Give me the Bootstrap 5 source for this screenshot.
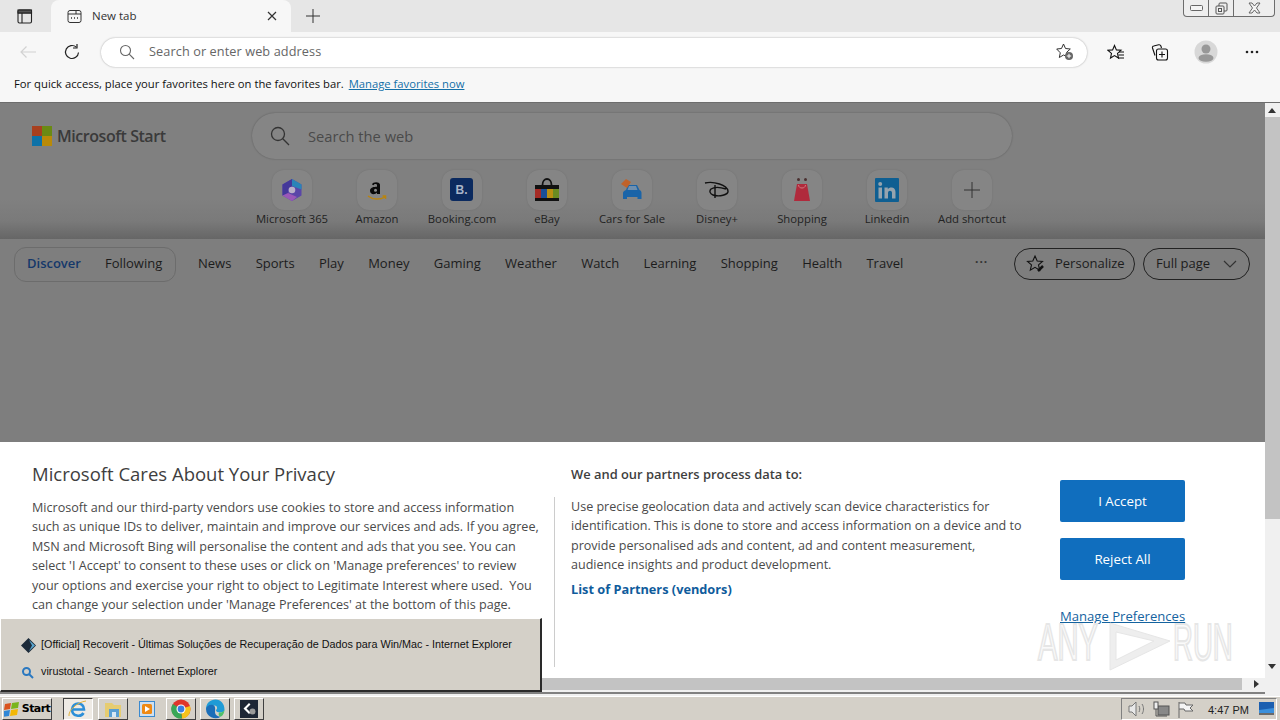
<!DOCTYPE html>
<html lang="en">
<head>
<meta charset="utf-8">
<title>New tab</title>
<link href="https://cdn.jsdelivr.net/npm/bootstrap@5.3.0/dist/css/bootstrap.min.css" rel="stylesheet">
<style>
html,body{height:720px;overflow:hidden}
body{width:1280px;font-family:"Open Sans","Noto Sans",sans-serif;color:#1a1a1a;background:#fff;position:relative}
a{text-decoration:none}
.tabstrip{height:32px;background:#e6e6e6}
.winbox{width:42px;height:32px}
.tabshape{width:240px;height:32px;margin-left:5px;padding:0 14px 0 16px;background:#f7f7f7;border-radius:8px 8px 0 0;font-size:12px;color:#333}
.tab-title{margin-left:10px;font-size:11.5px}
.newtab{margin-left:12px;width:20px}
.capbtns{position:absolute;right:5px;top:0;width:92px;height:17px;border:1px solid #6c6c6c;border-top:0;border-radius:0 0 4px 4px;background:#eee}
.capbtns>div{border-right:1px solid #6c6c6c;height:100%}
.capbtns>div:last-child{border-right:0}
.capslot{width:25px}
.toolbar{height:38px;background:#f7f7f7;padding-top:2px}
.backslot{width:26px;margin-left:15px}
.reloadslot{width:26px;margin-left:18px}
.omni{width:986px;height:29px;margin-left:16px;background:#fff;border-radius:15px;box-shadow:0 0 2px rgba(0,0,0,.35);padding:0 13px 0 18px;font-size:12.7px;color:#666}
.omni-text{margin-left:14px;letter-spacing:.1px}
.tooliconslot{width:24px}
.slot-a{margin-left:17px}
.slot-b{margin-left:20px}
.slot-c{margin-left:22px}
.favbar{background:#f7f7f7;border-bottom:1px solid #6d6d6d;padding:0 0 3px 14px;font-size:11.25px;color:#111;height:33px}
.favbar a{margin-left:5px;color:#1470a8;text-decoration:underline}
.stage{height:591px}
.viewport{width:1265px;position:relative;background:#808080}
.topdim{height:136px;background:linear-gradient(#808080 0,#808080 96px,#7a7a7a 118px,#666 136px);position:relative}
.brandrow{padding:10px 0 0 32px;height:67px}
.msbrand{width:220px;height:46px;font-size:16px;font-weight:600;color:#3a3a3a;letter-spacing:-.45px}
.winlogo{display:grid;grid-template-columns:10px 10px;gap:0;margin-right:5px}
.winlogo i{display:block;width:10px;height:10px}
.websearch{width:760px;height:46px;border-radius:23px;background:#858585;box-shadow:0 0 2px rgba(0,0,0,.3);padding-left:18px;font-size:14.7px;color:#4a4a4a}
.websearch span{margin-left:18px;padding-top:1px}
.shortcuts{padding-left:249.5px;height:69px}
.sc-item{width:85px;font-size:11.3px;color:#222;text-align:center}
.sc-tile{width:40px;height:40px;border-radius:12px;background:#858585;box-shadow:0 0 2px rgba(0,0,0,.12);margin-bottom:1px}
.sc-label{white-space:nowrap;line-height:15px}
.navzone{height:203px;background:#7e7e7e;padding:8px 15px 0 14px;font-size:13px;color:#1c1c1c}
.feedtoggle{width:162px;height:35px;border:1px solid #6c6c6c;border-radius:12px;padding:0 0 2px 12px;gap:24px}
.feedtoggle b{color:#15386a;font-weight:600}
.navlinks{margin-left:22px;gap:24.3px;height:35px;padding-bottom:2px}
.moredots{position:absolute;left:961px;top:0;height:35px;font-size:12px;font-weight:700;line-height:30px;color:#333;letter-spacing:1px}
.navright{position:absolute;right:0;top:0;gap:8px}
.pillbtn{height:32px;border:1px solid #222;border-radius:16px;background:transparent;padding:0 11px;color:#1c1c1c;font-size:13px;margin-top:1px}
.pill-a{width:121px}
.pill-a svg{margin-right:9px}
.pill-b{width:107px;padding:0 12px}
.navrow{position:relative;height:35px}
.consent{height:236px;background:#fff;position:relative;color:#4a4a4a}
.c-left{width:555px;padding:21px 0 0 32px;font-size:12.6px;line-height:19.4px}
.c-title{font-size:18.5px;font-weight:400;color:#3e3e3e;margin-bottom:14px;line-height:21px}
.c-body{width:510px;margin:0;white-space:nowrap}
.c-mid{width:475px;padding:24px 0 0 16px;font-size:12.55px;line-height:19.4px}
.c-rule{position:absolute;left:554px;top:55px;height:170px;width:1px;background:#ccc}
.c-mid h3{font-size:12.9px;font-weight:600;margin-bottom:15px;line-height:16px;color:#3e3e3e}
.c-mid p{margin:0 0 5px;white-space:nowrap}
.c-mid a{font-size:12.75px;font-weight:700;color:#0f5c9c}
.c-right{padding:38px 0 0 30px;width:200px}
.blue-btn{display:block;width:125px;height:42px;border:0;border-radius:2px;background:#106ebe;color:#fff;font-size:13.3px;margin-bottom:16px;padding:1px 0 0}
.prefs{display:block;width:125px;margin-top:27px;font-size:13.1px;color:#15639f;text-decoration:underline;white-space:nowrap;line-height:18px}
.hbar{height:14px;background:#f0f0f0;position:relative}
.hbar-thumb{position:absolute;left:0;right:23px;top:0;height:12px;background:#c3c3c3}
.hbar-arrow{position:absolute;right:6px;top:2px;width:0;height:0;border-left:5px solid #333;border-top:4px solid transparent;border-bottom:4px solid transparent}
.vbar{width:15px;background:#f0f0f0;position:relative}
.vbar-thumb{position:absolute;left:0;right:0;top:14px;height:402px;background:#c3c3c3}
.v-up,.v-down{position:absolute;left:3px;width:0;height:0;border-left:4px solid transparent;border-right:4px solid transparent}
.v-up{top:5px;border-bottom:5px solid #333}
.v-down{top:561px;border-top:5px solid #333}
.gap-row{height:2px;background:#f0f0f0}
.taskbar{height:25px;background:#d4d0c8;border-top:1px solid #fff;position:relative;font-family:"Liberation Sans",sans-serif;font-size:11px;padding:1px 0 0 2px}
.startbtn{width:50px;height:22px;background:#d4d0c8;border:1px solid;border-color:#fff #404040 #404040 #fff;font-weight:700;font-size:11px;color:#000;font-family:"DejaVu Sans",sans-serif;letter-spacing:-.6px}
.startbtn svg{margin-right:2px}
.tbtn{width:30px;height:22px;border:1px solid;border-color:#fff #404040 #404040 #fff;margin-left:4px;background:#d4d0c8}
.tbtn.active{background:#eeeae4;border-color:#404040 #fff #fff #404040;margin-left:11px}
.tbtn.folder{margin-left:5px}
.tbtn.plain{border-color:transparent}
.tray{position:absolute;right:3px;top:1px;height:22px;width:156px;border:1px solid;border-color:#808080 #fff #fff #808080;font-size:11px;color:#222}
.tray-time{position:absolute;left:86px;top:3px}
.tray-ico{position:absolute;top:2px}
.ti-a{left:6px}.ti-b{left:31px}.ti-c{left:55px}.ti-d{left:137px;top:3px}
.thumbpop{position:absolute;left:0;top:618px;width:542px;height:74px;background:#d4d0c8;border:1px solid;border-color:#fff #2a2a2a #2a2a2a #fff;border-width:1px 2px 2px 1px;padding:12px 0 0 20px;font-family:"Liberation Sans",sans-serif;font-size:10.8px;color:#111}
.thumbpop .rowline{height:27px;white-space:nowrap}
.thumbpop .ico{width:20px}
.wm{position:absolute;left:1036px;top:610px;width:200px;height:66px;pointer-events:none}
</style>
</head>
<body>
<div class="tabstrip d-flex align-items-center position-relative">
  <div class="winbox d-flex align-items-center justify-content-center ms-1">
    <svg width="16" height="15" viewBox="0 0 16 15" fill="none" stroke="#222" stroke-width="1.100"><rect x="1" y="1" width="13.500" height="13" rx="1.500"/><path d="M1 4h13.500M5 4v10"/><rect x="1" y="1" width="13.500" height="3" fill="#555"/></svg>
  </div>
  <div class="tabshape d-flex align-items-center">
    <svg width="15" height="15" viewBox="0 0 15 15" fill="none" stroke="#333" stroke-width="1"><rect x="1" y="1.500" width="13" height="12" rx="2"/><path d="M1 5h13M9 1.500V5"/><path d="M4 9h1M7 9h1M10 9h1" stroke-width="1.400"/></svg>
    <span class="tab-title flex-grow-1">New tab</span>
    <svg width="10" height="10" viewBox="0 0 10 10" stroke="#333" stroke-width="1.200"><path d="M1 1l8 8M9 1l-8 8"/></svg>
  </div>
  <div class="newtab d-flex align-items-center justify-content-center">
    <svg width="16" height="16" viewBox="0 0 16 16" stroke="#333" stroke-width="1"><path d="M8 1v14M1 8h14"/></svg>
  </div>
  <div class="capbtns d-flex">
    <div class="capslot d-flex align-items-center justify-content-center"><svg width="13" height="6" viewBox="0 0 13 6" fill="#f4f4f4" stroke="#666"><rect x=".5" y=".5" width="12" height="5" rx="1"/></svg></div>
    <div class="capslot d-flex align-items-center justify-content-center"><svg width="13" height="13" viewBox="0 0 13 13" fill="none" stroke="#555"><rect x="4" y="1" width="8" height="8" rx="1"/><rect x="1" y="4" width="8" height="8" rx="1" fill="#eee"/><rect x="3.500" y="6.500" width="3" height="3"/></svg></div>
    <div class="d-flex align-items-center justify-content-center flex-grow-1"><svg width="13" height="12" viewBox="0 0 13 12" fill="#f4f4f4" stroke="#666"><path d="M1 1h3l2.500 3L9 1h3L8.500 6 12 11H9L6.500 8 4 11H1l3.500-5z"/></svg></div>
  </div>
</div>
<div class="toolbar d-flex align-items-center">
  <div class="backslot d-flex justify-content-center"><svg width="18" height="14" viewBox="0 0 18 14" fill="none" stroke="#d2d2d2" stroke-width="1.200"><path d="M17 7H2M7.500 1.500L2 7l5.500 5.500"/></svg></div>
  <div class="reloadslot d-flex justify-content-center"><svg width="18" height="18" viewBox="0 0 18 18" fill="none" stroke="#222" stroke-width="1.200"><path d="M15.500 9.500a6.500 6.500 0 1 1-2.200-5.400"/><path d="M14 1v4h-4"/></svg></div>
  <div class="omni d-flex align-items-center">
    <svg width="16" height="16" viewBox="0 0 16 16" fill="none" stroke="#666" stroke-width="1.100"><circle cx="6.500" cy="6.500" r="5"/><path d="M10.200 10.200L15 15"/></svg>
    <span class="omni-text flex-grow-1">Search or enter web address</span>
    <svg width="18" height="18" viewBox="0 0 18 18" fill="none" stroke="#333" stroke-width="1"><path d="M8 1.500l2 4.500 4.800.5-3.600 3.200 1 4.700L8 12.500 3.800 15l1-4.700L1.200 6.500 6 6z" transform="translate(-.5 -.5)"/><circle cx="13" cy="13" r="4" fill="#666" stroke="none"/><path d="M13 10.800v4.400M10.800 13h4.400" stroke="#fff"/></svg>
  </div>
  <div class="tooliconslot slot-a d-flex justify-content-center"><svg width="18" height="17" viewBox="0 0 18 17" fill="none" stroke="#111" stroke-width="1.100"><path d="M7.500 1.500l1.900 4.400 4.600.4-3.500 3.100 1 4.600-4-2.400-4 2.400 1-4.600L1 6.300l4.600-.4z"/><path d="M12 8h5M11.500 11h5.500M11 14h6"/></svg></div>
  <div class="tooliconslot slot-b d-flex justify-content-center"><svg width="18" height="18" viewBox="0 0 18 18" fill="none" stroke="#111" stroke-width="1.100"><path d="M4 12.500L1.500 5c-.3-1 .2-1.800 1.200-2l5-1.200c1-.2 1.800.2 2.200 1.200l.6 2"/><rect x="5.500" y="6" width="11" height="11" rx="2" fill="#f7f7f7"/><path d="M11 8.500v6M8 11.500h6"/></svg></div>
  <div class="tooliconslot slot-c d-flex justify-content-center"><svg width="24" height="24" viewBox="0 0 24 24"><circle cx="12" cy="12" r="11.500" fill="#d8d8d8"/><circle cx="12" cy="9" r="4.500" fill="#989898"/><ellipse cx="12" cy="18" rx="7.500" ry="3.800" fill="#989898"/></svg></div>
  <div class="tooliconslot slot-c d-flex justify-content-center"><svg width="14" height="4" viewBox="0 0 14 4" fill="#222"><circle cx="2" cy="2" r="1.300"/><circle cx="7" cy="2" r="1.300"/><circle cx="12" cy="2" r="1.300"/></svg></div>
</div>
<div class="favbar d-flex align-items-center"><span>For quick access, place your favorites here on the favorites bar.</span><a href="#">Manage favorites now</a></div>

<div class="stage d-flex">
  <div class="viewport d-flex flex-column">
    <div class="topdim">
      <div class="brandrow d-flex">
        <div class="msbrand d-flex align-items-center">
          <span class="winlogo"><i style="background:#a8401f"></i><i style="background:#6a8a14"></i><i style="background:#0e72a8"></i><i style="background:#b98a08"></i></span>
          Microsoft Start
        </div>
        <div class="websearch d-flex align-items-center">
          <svg width="20" height="20" viewBox="0 0 20 20" fill="none" stroke="#333" stroke-width="1.300"><circle cx="8" cy="8" r="6.500"/><path d="M12.800 12.800L19 19"/></svg>
          <span>Search the web</span>
        </div>
      </div>
      <div class="shortcuts d-flex">
        <div class="sc-item d-flex flex-column align-items-center"><div class="sc-tile d-flex align-items-center justify-content-center"><svg width="22" height="24" viewBox="0 0 22 24"><path d="M11 1l9.500 5.500v11L11 23l-9.500-5.500v-11z" fill="#5a46a8"/><path d="M11 1l9.500 5.500v5L11 8z" fill="#2a84b8"/><path d="M1.500 6.500L11 1v7l-4 3v6.500l-5.500 0z" fill="#44389a"/><path d="M7 15l9 4 -5 4-9.500-5.500z" fill="#9a58b8"/><circle cx="11" cy="12" r="3.300" fill="#b9b0c8"/></svg></div><div class="sc-label">Microsoft 365</div></div>
        <div class="sc-item d-flex flex-column align-items-center"><div class="sc-tile d-flex align-items-center justify-content-center"><svg width="22" height="26" viewBox="0 0 22 26" fill="none"><path d="M6 7.500c.5-2.500 7-3.500 8 0v9.500h-3v-1.500c-2 2.500-7 2.300-7-1.800 0-3.500 4-4 7-4V8c-.2-1.500-3-1.500-3.400.3z" fill="#0a0a0a"/><circle cx="9.500" cy="13.300" r="1.500" fill="#8a8a8a"/><path d="M2 19c5 4 12 4 17 .8M16.500 19h3v3" stroke="#b98410" stroke-width="1.500"/></svg></div><div class="sc-label">Amazon</div></div>
        <div class="sc-item d-flex flex-column align-items-center"><div class="sc-tile d-flex align-items-center justify-content-center"><svg width="24" height="24" viewBox="0 0 24 24"><rect width="23" height="23" rx="3" fill="#0b2a5f"/><text x="11.500" y="16" text-anchor="middle" font-family="Liberation Sans" font-weight="700" font-size="12" fill="#a9b4c8">B.</text></svg></div><div class="sc-label">Booking.com</div></div>
        <div class="sc-item d-flex flex-column align-items-center"><div class="sc-tile d-flex align-items-center justify-content-center"><svg width="26" height="26" viewBox="0 0 26 26"><path d="M8.500 8c0-8 9-8 9 0" fill="none" stroke="#111" stroke-width="1.800"/><rect x="1" y="8" width="24" height="4" fill="#111"/><rect x="1" y="12" width="6" height="9" fill="#a52b25"/><rect x="7" y="12" width="6" height="9" fill="#1a4f96"/><rect x="13" y="12" width="6" height="9" fill="#b98f12"/><rect x="19" y="12" width="6" height="9" fill="#6a8b22"/><rect x="1" y="21" width="24" height="3" fill="#111"/></svg></div><div class="sc-label">eBay</div></div>
        <div class="sc-item d-flex flex-column align-items-center"><div class="sc-tile d-flex align-items-center justify-content-center"><svg width="24" height="24" viewBox="0 0 24 24"><path d="M6 12l2-5h9l2.500 5c1.500.5 2 1.500 2 3v6h-4v-2H7v2H3v-6c0-1.500 1.500-2.500 3-3z" fill="#1a64a8"/><path d="M9 8h7l1.500 4h-10z" fill="#6f8fae"/><path d="M1 6l5-5 5 3-4 6z" fill="#c0622a"/></svg></div><div class="sc-label">Cars for Sale</div></div>
        <div class="sc-item d-flex flex-column align-items-center"><div class="sc-tile d-flex align-items-center justify-content-center"><svg width="26" height="18" viewBox="0 0 26 18" fill="none" stroke="#111" stroke-width="1.400"><path d="M1 2c9-2 22 2 23 8 .5 4-9 6-15 4-3-1-4-4-2-6 3-2 9-2 15 0"/><path d="M11 4v13"/></svg></div><div class="sc-label">Disney+</div></div>
        <div class="sc-item d-flex flex-column align-items-center"><div class="sc-tile d-flex align-items-center justify-content-center"><svg width="20" height="26" viewBox="0 0 20 26"><path d="M5 7h10l3 17H2z" fill="#b02a3c"/><circle cx="6.500" cy="2.500" r="1.500" fill="#4a3030"/><circle cx="13.500" cy="2.500" r="1.500" fill="#4a3030"/><path d="M6.500 8c0 4 7 4 7 0" stroke="#d07a80" fill="none"/></svg></div><div class="sc-label">Shopping</div></div>
        <div class="sc-item d-flex flex-column align-items-center"><div class="sc-tile d-flex align-items-center justify-content-center"><svg width="24" height="24" viewBox="0 0 24 24"><rect width="24" height="24" rx="1" fill="#0f5f92"/><rect x="3.500" y="9.500" width="3.500" height="11" fill="#96a4ae"/><circle cx="5.200" cy="6" r="2" fill="#96a4ae"/><path d="M9.500 9.500h3.300v1.700c1.500-2.500 7.700-2.800 7.700 3v6.300H17v-5.500c0-3-4-3-4 0v5.500H9.500z" fill="#96a4ae"/></svg></div><div class="sc-label">Linkedin</div></div>
        <div class="sc-item d-flex flex-column align-items-center"><div class="sc-tile d-flex align-items-center justify-content-center"><svg width="16" height="16" viewBox="0 0 16 16" stroke="#333" stroke-width="1"><path d="M8 0v16M0 8h16"/></svg></div><div class="sc-label">Add shortcut</div></div>
      </div>
    </div>
    <div class="navzone">
      <div class="navrow d-flex">
        <div class="feedtoggle d-flex align-items-center"><b>Discover</b><span>Following</span></div>
        <div class="navlinks d-flex align-items-center">
          <span>News</span><span>Sports</span><span>Play</span><span>Money</span><span>Gaming</span><span>Weather</span><span>Watch</span><span>Learning</span><span>Shopping</span><span>Health</span><span>Travel</span>
        </div>
        <span class="moredots">···</span>
        <div class="navright d-flex">
          <button class="pillbtn pill-a d-flex align-items-center"><svg width="20" height="20" viewBox="0 0 20 20" fill="none" stroke="#111" stroke-width="1.100" class="flex-shrink-0"><path d="M9 2l2.200 5 5.300.4-4 3.500 1.200 5.300-4.700-2.800-4.700 2.800 1.200-5.300-4-3.500 5.300-.4z"/><path d="M12 17l5-5" stroke-width="2.500"/></svg>Personalize</button>
          <button class="pillbtn pill-b d-flex align-items-center justify-content-between">Full page<svg width="14" height="8" viewBox="0 0 14 8" fill="none" stroke="#333" stroke-width="1.200"><path d="M1 1l6 6 6-6"/></svg></button>
        </div>
      </div>
    </div>
    <div class="consent d-flex">
      <div class="c-left">
        <h2 class="c-title">Microsoft Cares About Your Privacy</h2>
        <p class="c-body">Microsoft and our third-party vendors use cookies to store and access information<br>such as unique IDs to deliver, maintain and improve our services and ads. If you agree,<br>MSN and Microsoft Bing will personalise the content and ads that you see. You can<br>select 'I Accept' to consent to these uses or click on 'Manage preferences' to review<br>your options and exercise your right to object to Legitimate Interest where used.&nbsp; You<br>can change your selection under 'Manage Preferences' at the bottom of this page.</p>
      </div>
      <div class="c-rule"></div>
      <div class="c-mid">
        <h3>We and our partners process data to:</h3>
        <p>Use precise geolocation data and actively scan device characteristics for<br>identification. This is done to store and access information on a device and to<br>provide personalised ads and content, ad and content measurement,<br>audience insights and product development.</p>
        <a href="#">List of Partners (vendors)</a>
      </div>
      <div class="c-right">
        <button class="blue-btn">I Accept</button>
        <button class="blue-btn">Reject All</button>
        <a class="prefs" href="#">Manage Preferences</a>
      </div>
    </div>
    <div class="hbar"><div class="hbar-thumb"></div><div class="hbar-arrow"></div></div>
  </div>
  <div class="vbar"><div class="v-up"></div><div class="vbar-thumb"></div><div class="v-down"></div></div>
</div>
<div class="gap-row"></div>

<svg class="wm" viewBox="0 0 200 66">
  <g fill="#fafafa" stroke="#e6e6e6" stroke-width="2.200" font-family="Liberation Sans" font-size="52">
    <text transform="translate(2 50) scale(.56 1)">ANY</text>
    <text transform="translate(137 50) scale(.53 1)">RUN</text>
  </g>
  <path d="M74 13L134 31 74 60zM80 22V50L118 31z" fill="#eeeeee" fill-rule="evenodd" stroke="#e6e6e6"/>
</svg>

<div class="thumbpop">
  <div class="rowline d-flex align-items-center"><span class="ico"><svg width="15" height="15" viewBox="0 0 15 15"><path d="M7.500 0L15 7.500 7.500 15 0 7.500z" fill="#1d2b3a"/><path d="M8 2l6 5.500L8 13l3-5.500z" fill="#5ba7d1"/></svg></span>[Official] Recoverit - Últimas Soluções de Recuperação de Dados para Win/Mac - Internet Explorer</div>
  <div class="rowline d-flex align-items-center"><span class="ico"><svg width="13" height="13" viewBox="0 0 13 13" fill="none" stroke="#2a78c0" stroke-width="2"><circle cx="5.500" cy="5.500" r="3.500"/><path d="M8 8l4 4"/></svg></span>virustotal - Search - Internet Explorer</div>
</div>

<div class="taskbar d-flex">
  <div class="startbtn d-flex align-items-center justify-content-center"><svg width="16" height="15" viewBox="0 0 16 15" class="flex-shrink-0"><path d="M1 2l6-1-1 6-6 1z" fill="#d9531e"/><path d="M8 1l7-1-1 6-7 1z" fill="#7ab51d"/><path d="M0 9l6-1-1 6-6 1z" fill="#2f86d6"/><path d="M7 8l7-1-1 6-7 1z" fill="#f2b705"/></svg>Start</div>
  <div class="tbtn active d-flex align-items-center justify-content-center"><svg width="20" height="20" viewBox="0 0 20 20" fill="none" stroke="#2d8fd8" stroke-width="2.600"><path d="M4 10.500h12c0-8-11.500-8-12 0 0 7 9 8 11.500 3.500"/><path d="M1 17c-1-5 8-14 17-15" stroke="#e0b13a" stroke-width="1"/></svg></div>
  <div class="tbtn folder d-flex align-items-center justify-content-center"><svg width="20" height="18" viewBox="0 0 20 18"><path d="M2 3h7l2 2h7v12H2z" fill="#e6cc70"/><rect x="6" y="9" width="10" height="8" fill="#5a9fd4"/><rect x="9" y="12" width="4" height="5" fill="#d8e8f4"/></svg></div>
  <div class="tbtn plain d-flex align-items-center justify-content-center"><svg width="16" height="16" viewBox="0 0 16 16"><rect x=".5" y=".5" width="15" height="15" fill="#cfe0f0" stroke="#3b8ad0"/><rect x="3" y="3" width="10" height="10" rx="1.500" fill="#f08a14"/><path d="M6 5l5 3-5 3z" fill="#fff"/></svg></div>
  <div class="tbtn d-flex align-items-center justify-content-center"><svg width="20" height="20" viewBox="0 0 20 20"><circle cx="10" cy="10" r="9.500" fill="#e0352b"/><path d="M10 10L19 7a9.500 9.500 0 0 1-8 12.500z" fill="#f6c21c"/><path d="M10 10l1 9.500A9.500 9.500 0 0 1 1.800 5z" fill="#3aa757"/><circle cx="10" cy="10" r="4.500" fill="#fff"/><circle cx="10" cy="10" r="3.400" fill="#3b7de0"/></svg></div>
  <div class="tbtn d-flex align-items-center justify-content-center"><svg width="20" height="20" viewBox="0 0 20 20"><path d="M1 10C1 4 5.500.5 10.500.5 16 .5 19.500 5 19.500 10.500c0 2-2 3-4.500 3-2 0-4-.8-4-2 0-1 1.500-1.500 1-3C12 6.500 9.500 5.800 7 7 3.500 8.500 1 12 1 10z" fill="#1f9bd6"/><path d="M1 10c.5-3 4-5 7-4 3 1 2 5 2 7 0 3 3 5 6 4.500a9.500 9.500 0 0 1-15-7.500z" fill="#1b6eb8"/><path d="M14 13.500c2 .3 5-.5 5.500-3 0 3-1.500 6-3.500 7-2 .3-3-2-2-4z" fill="#4ec06a"/></svg></div>
  <div class="tbtn d-flex align-items-center justify-content-center"><svg width="18" height="18" viewBox="0 0 18 18"><rect width="18" height="18" fill="#1d2635"/><path d="M9 3L3.500 8.500 9 14l1.500-1.500L6.500 8.500 10.500 4.500z" fill="#fff"/><circle cx="12.500" cy="11.500" r="3" fill="#9a9a9a"/></svg></div>
  <div class="tray">
    <svg class="tray-ico ti-a" width="18" height="16" viewBox="0 0 18 16" fill="none" stroke="#777"><path d="M1 5h3l4-4v14l-4-4H1z" fill="#e8e8e8"/><path d="M11 5c1 2 1 4 0 6M14 3c2 3 2 7 0 10"/></svg>
    <svg class="tray-ico ti-b" width="17" height="17" viewBox="0 0 17 17" fill="none" stroke="#555"><rect x="5" y="5" width="11" height="9" fill="#888"/><rect x="1" y="1" width="4" height="7" fill="#eee"/><path d="M3 8v7h11"/></svg>
    <svg class="tray-ico ti-c" width="18" height="18" viewBox="0 0 18 18" fill="none" stroke="#666"><path d="M2 1v16M2 2h6l1 2h7l-3 3 3 3H8L7 8H2" fill="#f4f4f4"/></svg>
    <span class="tray-time">4:47 PM</span>
    <svg class="tray-ico ti-d" width="15" height="13" viewBox="0 0 15 13"><rect width="15" height="11" fill="#1b5fb0"/><path d="M0 8l15-2v5H0z" fill="#3a8fdc"/><rect y="11" width="15" height="2" fill="#6a6a6a"/></svg>
  </div>
</div>
</body>
</html>
